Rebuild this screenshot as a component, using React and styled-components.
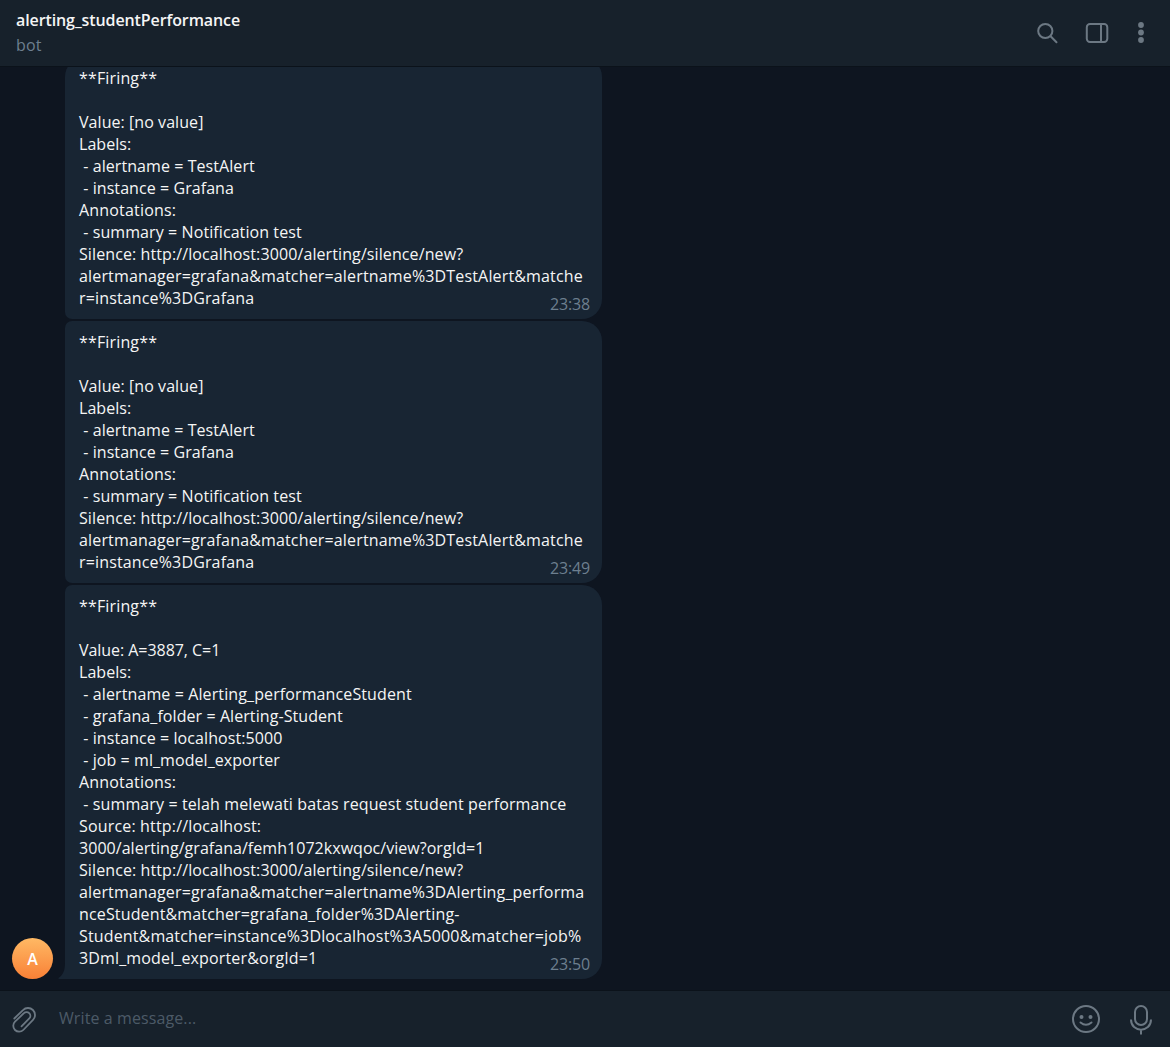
import React from "react";
import styled, { createGlobalStyle } from "styled-components";

const GlobalStyle = createGlobalStyle`
  * { box-sizing: border-box; }
  body { margin: 0; background: #0e1621; }
`;

const Window = styled.div`
  display: flex;
  flex-direction: column;
  width: 1170px;
  height: 1047px;
  overflow: hidden;
  background: #0e1520;
  color: #f5f5f5;
  font: 16px/22px "Open Sans", "Noto Sans", sans-serif;
`;

const Header = styled.header`
  display: flex;
  flex: none;
  justify-content: space-between;
  height: 67px;
  padding: 9px 23px 0 16px;
  background: #17212b;
  border-bottom: 1px solid #0b121a;
`;

const Title = styled.h1`
  margin: 0;
  font-size: 16px;
  line-height: 22px;
  font-weight: 600;
  letter-spacing: -0.1px;
`;

const Status = styled.div`
  margin-top: 3px;
  color: #6d7f8f;
  letter-spacing: 0.15px;
`;

const Actions = styled.div`
  display: flex;
  align-items: center;
  height: 48px;
  gap: 26px;
`;

const Icon = styled.svg`
  display: block;
  flex: none;
  fill: none;
  stroke: #6c7883;
  stroke-width: ${(p) => p.$weight || 2};
`;

const History = styled.main`
  display: flex;
  flex: 1;
  min-height: 0;
  align-items: flex-end;
  gap: 12px;
  padding: 0 12px 11px;
  overflow: hidden;
`;

const Avatar = styled.div`
  display: flex;
  flex: none;
  align-items: center;
  justify-content: center;
  width: 41px;
  height: 41px;
  border-radius: 50%;
  background: linear-gradient(#ffb964, #f98036);
  color: #fff;
  font-size: 16px;
  font-weight: 600;
`;

const Messages = styled.div`
  display: flex;
  flex-direction: column;
  gap: 2px;
  width: 537px;
`;

const Bubble = styled.article`
  position: relative;
  padding: 10px 14px;
  background: #182533;
  border-radius: ${(p) => (p.$first ? "20px" : "7px")} 20px 20px ${(p) => (p.$last ? "0" : "7px")};
`;

const Tail = styled.svg`
  position: absolute;
  left: -7px;
  bottom: 0;
  fill: #182533;
`;

const Line = styled.div`
  height: 22px;
  white-space: pre;
  letter-spacing: ${(p) => p.$tracking}px;
`;

const Time = styled.time`
  position: absolute;
  right: 12px;
  bottom: 4px;
  color: #6d7f8f;
  letter-spacing: -0.15px;
`;

const Composer = styled.footer`
  display: flex;
  flex: none;
  align-items: center;
  height: 57px;
  padding: 2px 16px 0 11px;
  background: #17212b;
  border-top: 1px solid #0b121a;
`;

const Input = styled.div`
  flex: 1;
  margin: 0 0 4px 20px;
  color: #4c5a67;
  letter-spacing: 0.1px;
`;

const Tools = styled.div`
  display: flex;
  gap: 28px;
`;

// Each line is [text, tracking in px].
const testAlert = [
  ["**Firing**", 0.15],
  ["", 0],
  ["Value: [no value]", 0.06],
  ["Labels:", 0.05],
  [" - alertname = TestAlert", 0.07],
  [" - instance = Grafana", 0.07],
  ["Annotations:", 0.18],
  [" - summary = Notification test", 0.085],
  ["Silence: http://localhost:3000/alerting/silence/new?", 0.1],
  ["alertmanager=grafana&matcher=alertname%3DTestAlert&matche", 0.158],
  ["r=instance%3DGrafana", 0.15],
];

const messages = [
  { time: "23:38", lines: testAlert },
  { time: "23:49", lines: testAlert },
  {
    time: "23:50",
    lines: [
      ["**Firing**", 0.15],
      ["", 0],
      ["Value: A=3887, C=1", -0.05],
      ["Labels:", 0.05],
      [" - alertname = Alerting_performanceStudent", 0.11],
      [" - grafana_folder = Alerting-Student", 0.075],
      [" - instance = localhost:5000", 0.075],
      [" - job = ml_model_exporter", 0.07],
      ["Annotations:", 0.18],
      [" - summary = telah melewati batas request student performance", 0.115],
      ["Source: http://localhost:", 0.17],
      ["3000/alerting/grafana/femh1072kxwqoc/view?orgId=1", 0.04],
      ["Silence: http://localhost:3000/alerting/silence/new?", 0.1],
      ["alertmanager=grafana&matcher=alertname%3DAlerting_performa", 0.155],
      ["nceStudent&matcher=grafana_folder%3DAlerting-", 0.15],
      ["Student&matcher=instance%3Dlocalhost%3A5000&matcher=job%", 0.143],
      ["3Dml_model_exporter&orgId=1", 0.145],
    ],
  },
];

const Message = ({ lines, time, first, last }) => (
  <Bubble $first={first} $last={last}>
    {lines.map(([text, tracking], i) => (
      <Line key={i} $tracking={tracking}>{text}</Line>
    ))}
    <Time>{time}</Time>
    {last && (
      <Tail width="8" height="16" viewBox="0 0 8 16">
        <path d="M8 0H7C7 7 5.5 11.5.5 15Q0 16 1.500 16H8Z" />
      </Tail>
    )}
  </Bubble>
);

export default function App() {
  return (
    <Window>
      <GlobalStyle />
      <Header>
        <div>
          <Title>alerting_studentPerformance</Title>
          <Status>bot</Status>
        </div>
        <Actions>
          <Icon width="24" height="24" viewBox="0 0 24 24">
            <circle cx="10.300" cy="10" r="7.100" />
            <path d="M15.600 15.300 21.500 21.300" strokeLinecap="round" />
          </Icon>
          <Icon width="24" height="24" viewBox="0 0 24 24">
            <rect x="1.800" y="3" width="20.500" height="18" rx="3.200" />
            <path d="M16 3v18" />
          </Icon>
          <Icon width="12" height="24" viewBox="0 0 12 24">
            <g fill="#6c7883" stroke="none">
              <circle cx="6" cy="4" r="2.900" />
              <circle cx="6" cy="11.500" r="2.900" />
              <circle cx="6" cy="19" r="2.900" />
            </g>
          </Icon>
        </Actions>
      </Header>
      <History>
        <Avatar>A</Avatar>
        <Messages>
          {messages.map((m, i) => (
            <Message key={m.time} {...m} first={i === 0} last={i === messages.length - 1} />
          ))}
        </Messages>
      </History>
      <Composer>
        <Icon $weight={1.8} width="28" height="28" viewBox="0 0 28 28" strokeLinecap="round">
          <path d="M3.300 12.500 12 4.100A6.900 6.900 0 0 1 22 13.900L12.300 24A5.800 5.800 0 0 1 4 15.700L12.900 7.200A3.700 3.700 0 0 1 18.300 12.400L10.500 20.300" />
        </Icon>
        <Input>Write a message...</Input>
        <Tools>
          <Icon width="28" height="28" viewBox="0 0 28 28">
            <circle cx="14" cy="14" r="13" />
            <circle cx="9.500" cy="12" r="2" fill="#6c7883" stroke="none" />
            <circle cx="18.500" cy="12" r="2" fill="#6c7883" stroke="none" />
            <path d="M8.500 17.500Q14 22 19.500 17.500" strokeLinecap="round" />
          </Icon>
          <Icon width="26" height="30" viewBox="0 0 26 30">
            <rect x="7" y="1" width="12" height="19" rx="6" />
            <path d="M3 14.500C3 28 23 28 23 14.500M13 24.500V29.500" />
          </Icon>
        </Tools>
      </Composer>
    </Window>
  );
}
